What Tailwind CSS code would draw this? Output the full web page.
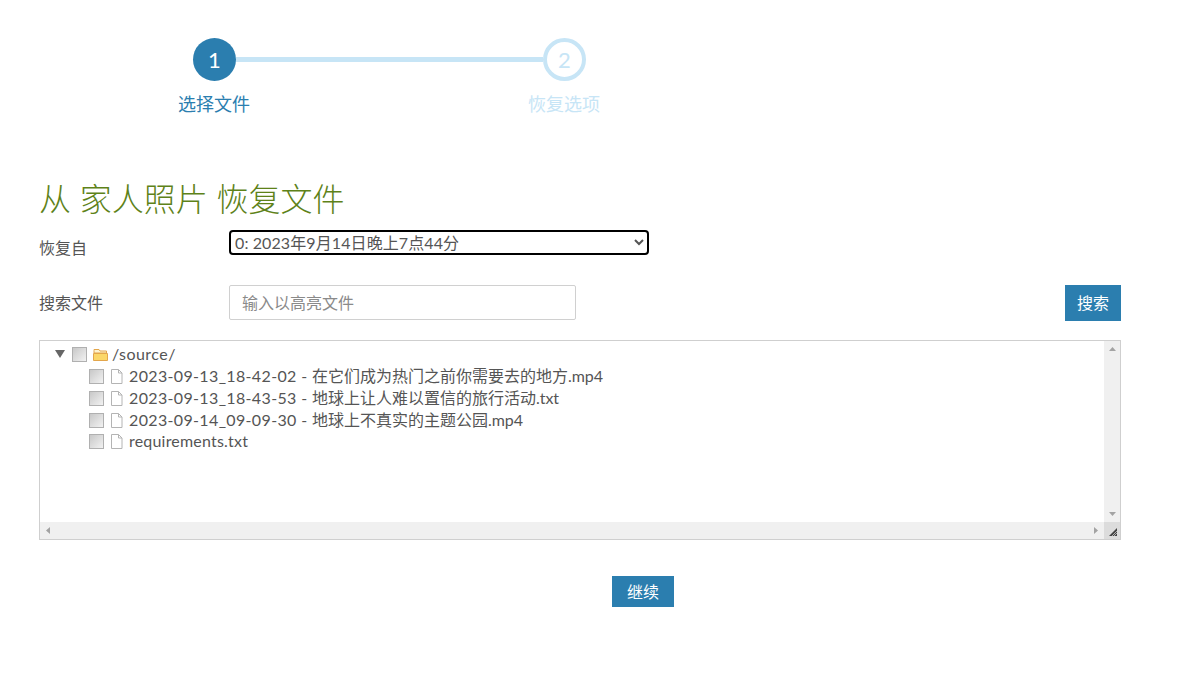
<!DOCTYPE html>
<html lang="zh-CN">
<head>
  <meta charset="UTF-8" />
  <title>恢复文件</title>
  <script src="https://cdn.jsdelivr.net/npm/@tailwindcss/browser@4"></script>
</head>
<body class="bg-white h-[678px] overflow-hidden font-['Lato','Noto_Sans_CJK_SC',sans-serif] text-[#555] text-[16px]">
  <div class="pl-[39px] w-[1121px]">

    <!-- steps -->
    <div class="pt-[38px] h-[124px]">
      <div class="flex items-center pl-[154px]">
        <div class="w-[43px] h-[43px] rounded-full bg-[#2b7eaf] text-white flex items-center justify-center text-[22px]">1</div>
        <div class="w-[307px] h-[5px] bg-[#c7e5f6]"></div>
        <div class="w-[43px] h-[43px] rounded-full bg-white border-[4px] border-[#c7e5f6] text-[#c7e5f6] flex items-center justify-center text-[22px]">2</div>
      </div>
      <div class="flex pl-[139px] gap-[278px] mt-[10px] text-[18px] leading-[26px]">
        <div class="text-[#2b7eaf]">选择文件</div>
        <div class="text-[#c7e5f6]">恢复选项</div>
      </div>
    </div>

    <h1 class="mt-[50px] text-[32px] leading-[50px] font-light text-[#5e8219]">从 家人照片 恢复文件</h1>

    <!-- form -->
    <div class="flex mt-[6px]">
      <label class="w-[190px] leading-[22px] pt-[7px]">恢复自</label>
      <select class="w-[420px] h-[25px] border-2 border-black rounded-[4px] bg-white text-[#555] tracking-[0.1px]">
        <option>0: 2023年9月14日晚上7点44分</option>
      </select>
    </div>

    <div class="flex mt-[26px] items-start">
      <label class="w-[190px] leading-[36px]">搜索文件</label>
      <input placeholder="输入以高亮文件" class="w-[347px] h-[35px] border border-[#d0d0d0] rounded-[2px] px-[12px] placeholder:text-[#8a8a8a]" />
      <button class="ml-auto w-[56px] h-[36px] bg-[#2b7eaf] text-white">搜索</button>
    </div>

    <!-- tree -->
    <div class="mt-[19px] h-[200px] border border-[#cfcfcf] flex flex-col">
      <div class="flex flex-1 min-h-0">
        <div class="flex-1 pt-[2px] leading-[22px]">
          <div class="flex items-center h-[22px] pl-[15px]">
            <svg class="w-[10px] h-[8px] mr-[7px]" viewBox="0 0 10 8"><path d="M0 0h10L5 8z" fill="#666"/></svg>
            <span class="w-[15px] h-[15px] mr-[6px] border border-[#b0b0b0] bg-gradient-to-br from-[#c8c8c8] to-[#f2f2f2]"></span>
            <svg class="w-[15px] h-[13px] mr-[4px]" viewBox="0 0 15 13"><path d="M1 2.500V1.500h5l1 1.500h6.500v2H1z" fill="#fdf3cf" stroke="#e3a64c"/><path d="M.5 5.500h14v7H.5z" fill="#fbd769" stroke="#e3a64c"/></svg>
            <span class="tracking-[0.45px]">/source/</span>
          </div>
          <div class="flex items-center h-[22px] pl-[49px]">
            <span class="w-[15px] h-[15px] mr-[6px] border border-[#b0b0b0] bg-gradient-to-br from-[#c8c8c8] to-[#f2f2f2]"></span>
            <svg class="w-[13px] h-[15px] mr-[6px]" viewBox="0 0 13 15"><path d="M1.500.5h7l3.500 3.500v10.500h-10.500z" fill="#fff" stroke="#b4b4b4"/><path d="M8.500.5v3.500h3.500" fill="none" stroke="#b4b4b4"/></svg>
            <span><span class="tracking-[0.35px]">2023-09-13_18-42-02 - </span>在它们成为热门之前你需要去的地方.mp4</span>
          </div>
          <div class="flex items-center h-[22px] pl-[49px]">
            <span class="w-[15px] h-[15px] mr-[6px] border border-[#b0b0b0] bg-gradient-to-br from-[#c8c8c8] to-[#f2f2f2]"></span>
            <svg class="w-[13px] h-[15px] mr-[6px]" viewBox="0 0 13 15"><path d="M1.500.5h7l3.500 3.500v10.500h-10.500z" fill="#fff" stroke="#b4b4b4"/><path d="M8.500.5v3.500h3.500" fill="none" stroke="#b4b4b4"/></svg>
            <span><span class="tracking-[0.35px]">2023-09-13_18-43-53 - </span>地球上让人难以置信的旅行活动.txt</span>
          </div>
          <div class="flex items-center h-[22px] pl-[49px]">
            <span class="w-[15px] h-[15px] mr-[6px] border border-[#b0b0b0] bg-gradient-to-br from-[#c8c8c8] to-[#f2f2f2]"></span>
            <svg class="w-[13px] h-[15px] mr-[6px]" viewBox="0 0 13 15"><path d="M1.500.5h7l3.500 3.500v10.500h-10.500z" fill="#fff" stroke="#b4b4b4"/><path d="M8.500.5v3.500h3.500" fill="none" stroke="#b4b4b4"/></svg>
            <span><span class="tracking-[0.35px]">2023-09-14_09-09-30 - </span>地球上不真实的主题公园.mp4</span>
          </div>
          <div class="flex items-center h-[22px] pl-[49px] -mt-[1px]">
            <span class="w-[15px] h-[15px] mr-[6px] border border-[#b0b0b0] bg-gradient-to-br from-[#c8c8c8] to-[#f2f2f2]"></span>
            <svg class="w-[13px] h-[15px] mr-[6px]" viewBox="0 0 13 15"><path d="M1.500.5h7l3.500 3.500v10.500h-10.500z" fill="#fff" stroke="#b4b4b4"/><path d="M8.500.5v3.500h3.500" fill="none" stroke="#b4b4b4"/></svg>
            <span class="tracking-[0.2px]">requirements.txt</span>
          </div>
        </div>
        <!-- vertical scrollbar -->
        <div class="w-[16px] bg-[#f0f0f0] flex flex-col items-center justify-between py-[6px]">
          <svg class="w-[7px] h-[4px]" viewBox="0 0 7 4"><path d="M0 4h7L3.500 0z" fill="#a3a3a3"/></svg>
          <svg class="w-[7px] h-[4px]" viewBox="0 0 7 4"><path d="M0 0h7L3.500 4z" fill="#a3a3a3"/></svg>
        </div>
      </div>
      <!-- horizontal scrollbar -->
      <div class="h-[17px] flex">
        <div class="flex-1 bg-[#f0f0f0] flex items-center justify-between px-[6px]">
          <svg class="w-[4px] h-[7px]" viewBox="0 0 4 7"><path d="M4 0v7L0 3.500z" fill="#a3a3a3"/></svg>
          <svg class="w-[4px] h-[7px]" viewBox="0 0 4 7"><path d="M0 0v7l4-3.500z" fill="#a3a3a3"/></svg>
        </div>
        <div class="w-[16px] bg-[#dcdcdc] flex items-end justify-end p-[3px]">
          <svg class="w-[8px] h-[8px]" viewBox="0 0 8 8"><path d="M0 8L8 0v8z" fill="#444"/><path d="M3 8l5-5M5 8l3-3" stroke="#ddd" stroke-width=".7"/></svg>
        </div>
      </div>
    </div>

    <div class="mt-[36px] pl-[573px]">
      <button class="w-[62px] h-[31px] bg-[#2b7eaf] text-white">继续</button>
    </div>
  </div>
</body>
</html>
